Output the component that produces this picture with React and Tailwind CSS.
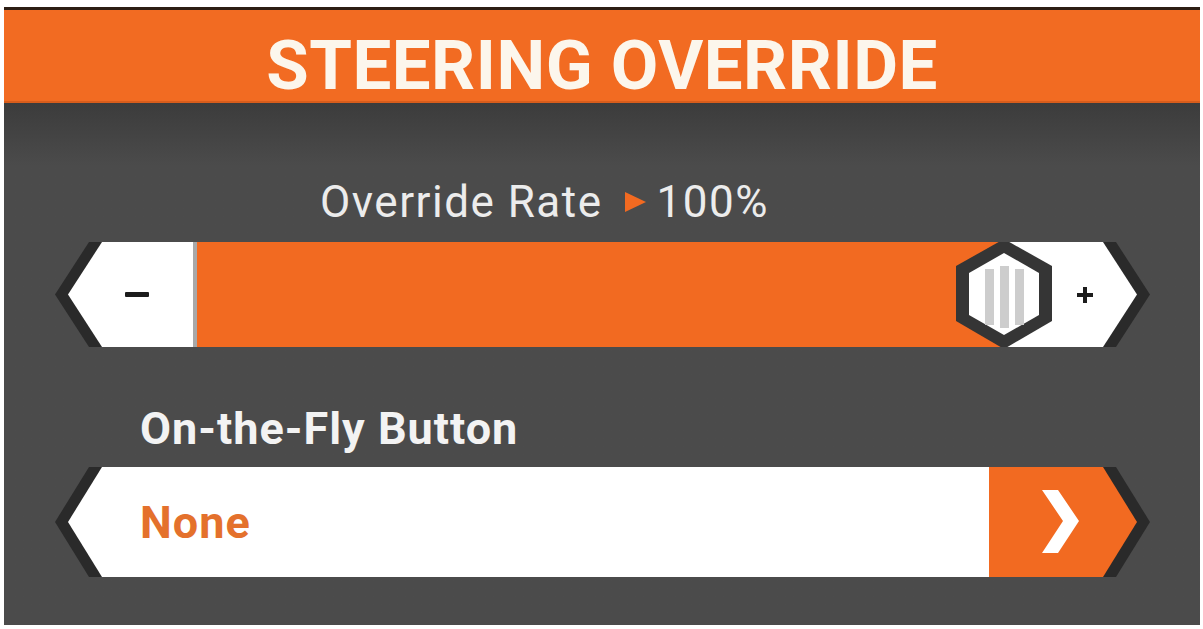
const arrowClip =
  "[clip-path:polygon(34px_0,calc(100%_-_34px)_0,100%_50%,calc(100%_-_34px)_100%,34px_100%,0_50%)]";

function HexThumb() {
  return (
    <svg
      className="absolute left-[886px] top-[-3px]"
      width="100"
      height="110"
      viewBox="0 0 100 110"
    >
      <polygon points="50,0 98,27 98,82 50,110 2,82 2,27" fill="#353535" />
      <polygon points="50,14 85,34 85,76 50,96 15,76 15,34" fill="#ffffff" />
      <rect x="31" y="30" width="9" height="56" fill="#cdcdcd" />
      <rect x="46" y="27" width="9" height="62" fill="#cdcdcd" />
      <rect x="61" y="30" width="9" height="56" fill="#cdcdcd" />
    </svg>
  );
}

function RateSlider() {
  return (
    <div className={`ml-[51px] w-[1095px] h-[105px] bg-[#2a2a2a] px-[13px] ${arrowClip}`}>
      <div className={`relative flex h-full ${arrowClip}`}>
        <div className="w-[125px] bg-white flex items-center justify-end pr-[44px]">
          <span className="block w-[24px] h-[5px] bg-[#1c1c1c] rounded-[1px]" />
        </div>
        <div className="w-[4px] bg-[#a8a8a8]" />
        <div className="flex-1 bg-[#f26a21]" />
        <div className="w-[135px] bg-white flex items-center pl-[75px]">
          <svg width="16" height="16" viewBox="0 0 16 16">
            <rect x="6" y="0" width="4" height="16" fill="#1c1c1c" />
            <rect x="0" y="6" width="16" height="4" fill="#1c1c1c" />
          </svg>
        </div>
        <HexThumb />
      </div>
    </div>
  );
}

function FlyButtonSelect() {
  return (
    <div className={`ml-[51px] w-[1095px] h-[110px] bg-[#2a2a2a] px-[13px] ${arrowClip}`}>
      <div className={`flex h-full ${arrowClip}`}>
        <div className="flex-1 bg-white flex items-center pl-[72px]">
          <span className="text-[45px] leading-none font-bold tracking-[1px] text-[#e4712c]">None</span>
        </div>
        <div className="w-[148px] bg-[#f26a21] flex items-center pl-[53px]">
          <svg width="40" height="64" viewBox="0 0 40 64">
            <polygon points="0,0 16,0 37,31 16,63 0,63 21,31" fill="#ffffff" />
          </svg>
        </div>
      </div>
    </div>
  );
}

export default function App() {
  return (
    <div className="min-h-screen bg-white pt-[7px] pl-[4px] font-['Roboto',sans-serif]">
      <div className="w-[1196px] h-[618px] flex flex-col border-t-[3px] border-[#2d1e14] bg-[#4b4b4b]">
        <header className="h-[93px] shrink-0 bg-[#f26b22] border-b-2 border-[#d85d1c] flex justify-center pt-[21px]">
          <h1 className="text-[69px] leading-none font-bold text-[#fcf6ec] tracking-[0.5px]">
            STEERING OVERRIDE
          </h1>
        </header>

        <div className="flex-1 flex flex-col bg-linear-to-b from-[#3c3c3c] to-[#4b4b4b] to-[12%]">
          <div className="mt-[77px] pl-[316px] flex items-center h-[44px]">
            <span className="text-[44px] leading-none tracking-[1.5px] text-[#ececec]">Override Rate</span>
            <svg className="ml-[20px] mr-[10px]" width="24" height="22" viewBox="0 0 24 22">
              <polygon points="2,1 23,11 2,21" fill="#f26a21" />
            </svg>
            <span className="text-[44px] leading-none tracking-[1.5px] text-[#ececec]">100%</span>
          </div>

          <div className="mt-[18px]">
            <RateSlider />
          </div>

          <div className="mt-[59px] pl-[136px] h-[45px] flex items-center">
            <span className="text-[45px] leading-none font-bold tracking-[1px] text-[#f3f3f3]">
              On-the-Fly Button
            </span>
          </div>

          <div className="mt-[16px]">
            <FlyButtonSelect />
          </div>
        </div>
      </div>
    </div>
  );
}
